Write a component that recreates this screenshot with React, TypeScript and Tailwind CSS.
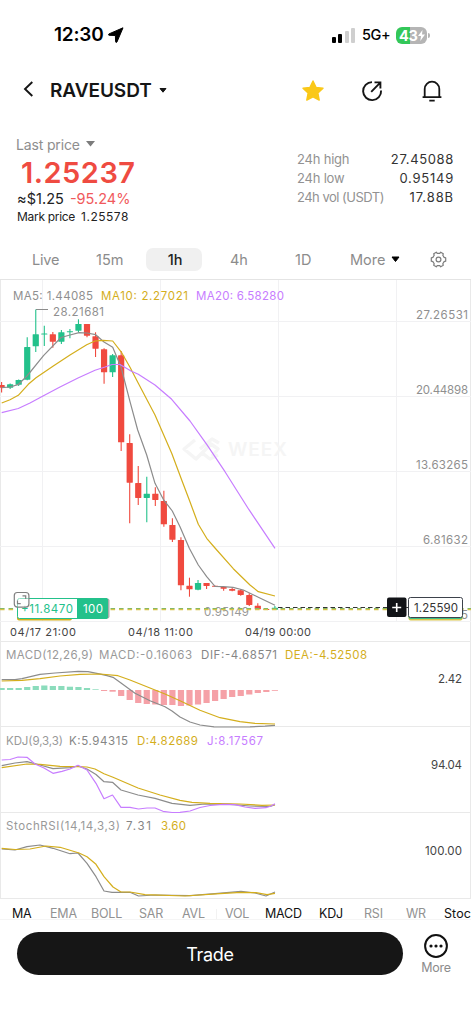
import React from 'react'
import clsx from 'clsx'

type Point = [number, number]

interface Candle {
  up: boolean
  top: number
  bottom: number
  high: number
  low: number
}

const GREEN = '#23c18b'
const RED = '#f04a3f'
const GRAY = '#8c8c8c'
const YELLOW = '#d4ae1c'
const PURPLE = '#c77dff'

const STEP = 8.54
const candleX = (i: number) => 1.6 + i * STEP

const c = (up: number, top: number, bottom: number, high: number, low: number): Candle => ({
  up: up === 1,
  top,
  bottom,
  high,
  low
})

const candles: Candle[] = [
  c(0, 385, 387.7, 382, 392.5),
  c(1, 384.3, 387.7, 383.5, 389),
  c(1, 380, 384.7, 379.5, 386),
  c(1, 347, 379.7, 337.3, 380.3),
  c(1, 334.3, 346.3, 309.5, 352),
  c(1, 333.6, 334.6, 325.7, 346),
  c(0, 334.3, 341.7, 332, 347.7),
  c(1, 332.3, 341.7, 330, 344),
  c(1, 331.2, 332.2, 329, 338.3),
  c(1, 324, 330.7, 319.3, 332.3),
  c(0, 324, 335.7, 324, 337.3),
  c(0, 336.3, 348.7, 332.3, 357),
  c(0, 349.3, 372.3, 348.3, 383.7),
  c(1, 355.3, 372.3, 354, 377),
  c(0, 355.3, 442.3, 351, 451),
  c(0, 443, 482.7, 434.3, 523.3),
  c(0, 483, 498, 466, 505),
  c(1, 493.7, 498, 476.7, 522.3),
  c(0, 493.7, 500, 487.3, 506),
  c(0, 501, 524.3, 490.7, 526.7),
  c(0, 525, 539.7, 518.3, 542),
  c(0, 540, 585.3, 537.3, 590.3),
  c(0, 585.7, 589.3, 577.7, 596.7),
  c(1, 583, 589.7, 580, 590.3),
  c(0, 583, 586, 583, 589),
  c(0, 585.8, 586.8, 585.8, 586.8),
  c(0, 587, 588.7, 586.7, 590.7),
  c(0, 589, 590.7, 587.7, 591.3),
  c(0, 590.3, 595, 589.3, 595.7),
  c(0, 595, 605, 593.3, 606),
  c(0, 605.7, 609.3, 603.3, 610),
  c(0, 609, 610, 609, 610),
  c(1, 607.7, 609.7, 606, 610)
]

const ma5: Point[] = [[1.7, 387.7], [10, 387], [18, 384.7], [27, 376], [43.5, 355.7], [61, 337.5], [70, 335], [79, 332.7], [87, 333], [95.7, 334.7], [104, 342], [112.7, 347.3], [121, 367], [130, 401.7], [137.7, 430], [146.7, 455], [155, 483.3], [163.3, 499.3], [172.3, 511], [180, 526.7], [189.3, 548.3], [198.3, 565], [206.7, 576.7], [215, 586.3], [223.3, 586.7], [233, 587.3], [243.3, 590], [258.3, 597.3], [275, 605.3]]
const ma10: Point[] = [[1.7, 403], [10, 399.7], [18.3, 395.3], [28.3, 384.3], [36, 377.7], [53.3, 366], [70, 355], [86.7, 344.7], [95, 341], [103.3, 340.3], [112.7, 341], [121.7, 352.7], [130, 367.3], [138.3, 383.3], [155, 415], [171.7, 453.3], [181.7, 480], [189.3, 500], [198.3, 524.3], [206.7, 538.3], [215, 548], [233.3, 568.7], [250, 585], [258.3, 591.7], [275, 596]]
const ma20: Point[] = [[1.7, 412.7], [18.3, 408.5], [30, 403], [43, 396], [60, 387], [78, 378], [95, 370.3], [105, 367], [112, 364.5], [120, 364.5], [131, 371], [138.3, 374.3], [155, 385], [171.7, 399.3], [190, 421], [206.7, 444.3], [225, 471.7], [249, 509.7], [275, 548.3]]

const dif: Point[] = [[1.7, 679.7], [15, 679.7], [22, 678.7], [40, 674.3], [55, 673], [78, 671.3], [88, 671.7], [98, 673.7], [107, 675.7], [113, 677.3], [121, 683], [135, 693.3], [150, 700.7], [165, 706.7], [172, 711], [180, 717], [190, 722], [200, 725], [214, 726.8], [230, 727], [250, 726.8], [265, 726.2], [275, 725.3]]
const dea: Point[] = [[1.7, 681], [22, 680.3], [40, 678.7], [60, 676], [80, 674.3], [100, 674], [118, 675.7], [130, 680], [150, 688], [165, 694], [180, 700.7], [200, 710.3], [220, 717.7], [240, 721.7], [255, 723.3], [275, 724]]
const histogram = [2, 2, 2, 3, 4, 4.5, 4, 4, 3.3, 3, 2, 0.7, -1, -1.7, -6, -10, -13, -14, -14.5, -15, -15, -16, -15.5, -14.5, -13, -11, -9, -7, -6, -4.5, -3, -2, -0.8]

const kdjJ: Point[] = [[1.7, 760], [10, 759.5], [18, 757], [27, 757.3], [35, 764], [44, 768], [53, 773.3], [62, 771.3], [70, 769], [78, 765.3], [87, 770], [96, 783.3], [104, 798.7], [112.5, 795], [121, 807.3], [130, 807.3], [138.5, 809], [147, 808], [155, 808], [163, 811.3], [172, 812.5], [180, 812.3], [190, 811], [200, 807.5], [210, 805.5], [223, 804.3], [235, 804.7], [245, 807], [255, 808.3], [266, 807.7], [271, 806], [275, 803.7]]
const kdjK: Point[] = [[1.7, 765.7], [15, 763], [27, 761.7], [40, 765], [53, 768.7], [70, 767.7], [78, 766], [87, 769], [96, 774.5], [104, 781.7], [112.5, 782.3], [121, 790], [138, 795], [155, 798.3], [172, 803.3], [190, 805.3], [205, 804], [230, 804.3], [250, 806], [270, 806.5], [275, 804.7]]
const kdjD: Point[] = [[1.7, 767.7], [27, 764], [40, 764.3], [60, 766.3], [78, 766.7], [87, 767], [95, 769], [104, 773.7], [113, 777.3], [138, 788], [160, 795], [180, 800.3], [192, 802.3], [210, 803.3], [240, 804], [262, 805.3], [275, 805]]

const stochK: Point[] = [[1.7, 849], [15, 850], [27, 846.7], [40, 845], [53, 848.3], [70, 853.7], [78, 853], [87, 863.3], [96, 876.7], [104, 891], [112, 892.3], [130, 892.3], [138.5, 896], [155, 895], [190, 895.7], [215, 893.7], [241, 891.3], [255, 893], [266, 896], [275, 892]]
const stochD: Point[] = [[1.7, 848.3], [15, 849.5], [30, 849], [46, 846], [60, 847.3], [70, 850.3], [79, 853], [87, 856.7], [96, 864.3], [104, 876.7], [113, 887], [121, 892], [130, 892], [145, 894.7], [185, 896], [220, 893.7], [241, 892.3], [256, 892.7], [267, 894.7], [275, 893.3]]

const Line: React.FC<{ points: Point[]; color: string }> = ({ points, color }) => (
  <polyline points={points.map((p) => p.join(',')).join(' ')} fill="none" stroke={color} strokeWidth="1.2" strokeLinejoin="round" />
)

interface LabelProps {
  x: number
  y: number
  w: number
  fill?: string
  size?: number
  weight?: number
  children: string
}

// w is the drawn width of the label, so columns of figures line up
const Label: React.FC<LabelProps> = ({ x, y, w, fill = '#8f8f8f', size = 11.5, weight = 400, children }) => (
  <text x={x} y={y} textLength={w} lengthAdjust="spacing" fill={fill} fontSize={size} fontWeight={weight}>
    {children}
  </text>
)

interface PanelProps {
  top: number
  height: number
  className: string
  children: React.ReactNode
}

const Panel: React.FC<PanelProps> = ({ top, height, className, children }) => (
  <svg viewBox={`0 ${top} 471 ${height}`} className={clsx('block w-full shrink-0 overflow-visible', className)}>
    <path d={`M.5 ${top}v${height}M470.5 ${top}v${height}M0 ${top + height - 0.5}h471`} stroke="#e9e9e9" />
    {children}
  </svg>
)

const StatusBar = () => (
  <div className="flex h-[70px] items-center justify-between pr-[41px] pl-[54px]">
    <div className="flex items-center gap-1">
      <span className="text-[19px] font-semibold tracking-[-0.2px] text-black">12:30</span>
      <svg width="16" height="16" viewBox="0 0 16 16">
        <path d="M15 .8 1 6.9c-.8.4-.6 1.3.2 1.4l6.2.2.2 6.2c.1.8 1 1 1.4.2z" fill="#000" stroke="#000" strokeLinejoin="round" />
      </svg>
    </div>
    <div className="flex items-center">
      <div className="flex h-[15px] w-6 items-end gap-[2.3px]">
        <i className="h-[6px] w-1 rounded-[1px] bg-black" />
        <i className="h-[9px] w-1 rounded-[1px] bg-black" />
        <i className="h-3 w-1 rounded-[1px] bg-[#cfcfcf]" />
        <i className="h-[15px] w-1 rounded-[1px] bg-[#cfcfcf]" />
      </div>
      <span className="ml-[6px] w-[28px] text-[14.5px] leading-5 font-medium tracking-[-0.4px] text-black">5G+</span>
      <div className="ml-[6px] flex h-[17px] w-[31px] items-center rounded-[6px] bg-[linear-gradient(90deg,#33c759_45%,#b5b5b5_45%)] pl-[3px] text-[14.5px] leading-[17px] font-bold tracking-[-0.3px] text-white">
        43
        <svg width="7" height="11" viewBox="0 0 7 11" className="shrink-0">
          <path d="M4.5 0 0 6h3l-.7 5L7 4.6H4z" fill="#fff" />
        </svg>
      </div>
      <i className="ml-px h-[5px] w-[2px] rounded-r bg-[#b5b5b5]" />
    </div>
  </div>
)

const Header = () => (
  <div className="flex h-10 items-center pt-px pl-[23px] text-[#151515]">
    <svg width="11" height="18" viewBox="0 0 11 18" className="-mt-1" fill="none" stroke="currentColor" strokeWidth="1.9">
      <path d="M9.3 2 2 9l7.3 7" />
    </svg>
    <h1 className="ml-4 w-[103px] pt-px text-[19px] font-semibold tracking-[-0.05px] whitespace-nowrap">RAVEUSDT</h1>
    <svg width="8" height="5" viewBox="0 0 8 5" className="ml-[6px]">
      <path d="M1 .5h6L4 4.2z" fill="currentColor" stroke="currentColor" strokeLinejoin="round" />
    </svg>
    <svg width="24" height="24" viewBox="0 0 24 24" className="ml-[134px]">
      <path d="m12 2 3 6.4 7 .9-5.1 4.8 1.3 7L12 17.8l-6.2 3.3 1.3-7L2 9.3l7-.9z" fill="#fac818" stroke="#fac818" strokeWidth="1.4" strokeLinejoin="round" />
    </svg>
    <svg width="24" height="24" viewBox="0 0 24 24" className="ml-[35px]" fill="none" stroke="currentColor" strokeWidth="1.9">
      <path d="M12 3.1a9 9 0 1 0 9.1 8.4M11.2 12.8 20 3.8M14.5 3.4h5.9v6" />
    </svg>
    <svg width="24" height="24" viewBox="0 0 24 24" className="ml-9" fill="none" stroke="currentColor" strokeWidth="1.8" strokeLinejoin="round">
      <path d="M4.7 17.5V10a7.3 7.3 0 0 1 14.6 0v7.5M2.6 18.2h18.8M9.3 21.7h5.4" />
    </svg>
  </div>
)

const stats = [
  { name: '24h high', value: '27.45088', nameStyles: 'tracking-[-0.2px]', valueStyles: 'tracking-[0.65px]' },
  { name: '24h low', value: '0.95149', nameStyles: 'tracking-[-0.2px]', valueStyles: 'tracking-[0.75px]' },
  { name: '24h vol (USDT)', value: '17.88B', nameStyles: 'tracking-[-0.5px]', valueStyles: 'tracking-[0.9px]' }
]

const Summary = () => (
  <div className="flex h-[135px] justify-between pt-[26px] pr-[17px] pl-4">
    <div className="flex flex-col items-start whitespace-nowrap">
      <div className="flex h-4 items-center gap-[6px] text-[14px] text-[#8e8e8e]">
        <span className="w-16 tracking-[-0.15px]">Last price</span>
        <svg width="9" height="6" viewBox="0 0 9 6">
          <path d="M0 0h9L4.5 5.6z" fill="#7c7c7c" />
        </svg>
      </div>
      <div className="mt-2 ml-[5px] text-[29px] leading-[26px] font-semibold tracking-[0.5px] text-[#ef4b41]">1.25237</div>
      <div className="mt-[3px] ml-px flex h-5 items-center gap-[6px] text-[14.5px]">
        <span className="tracking-[0.05px] text-[#222]">≈$1.25</span>
        <span className="text-[#f05a5c]">-95.24%</span>
      </div>
      <div className="ml-px flex h-4 items-center gap-[6px] text-[12px] text-[#222]">
        <span className="tracking-[-0.3px]">Mark price</span>
        <span className="tracking-[0.5px]">1.25578</span>
      </div>
    </div>
    <div className="w-[157px] pt-[14px] text-[13px] leading-[19px]">
      {stats.map(({ name, value, nameStyles, valueStyles }) => (
        <div key={name} className="flex justify-between whitespace-nowrap">
          <span className={clsx('text-[#929292]', nameStyles)}>{name}</span>
          <span className={clsx('text-[#333]', valueStyles)}>{value}</span>
        </div>
      ))}
    </div>
  </div>
)

const Intervals = () => (
  <div className="flex h-[34px] items-start pt-[3px] text-[14.5px] leading-[23px] text-[#8c8c8c]">
    <span className="ml-8 w-16 tracking-[-0.2px]">Live</span>
    <span className="w-[50px]">15m</span>
    <span className="w-14 rounded-[7px] bg-[#f0f0f0] pl-[2px] text-center font-medium text-[#222]">1h</span>
    <span className="ml-7 w-[65px]">4h</span>
    <span className="w-[55px]">1D</span>
    <span className="w-[41px]">More</span>
    <svg width="9" height="7" viewBox="0 0 9 7" className="mt-2">
      <path d="M1 1h7L4.5 5.5z" fill="#000" stroke="#000" strokeLinejoin="round" />
    </svg>
    <svg width="17" height="17" viewBox="0 0 17 17" className="mt-[3px] ml-[30px]" fill="none" stroke="#7d7d7d" strokeWidth="1.2" strokeLinejoin="round">
      <path d="M6.3 1.2 7.2 2.4h2.6l.9-1.2 2.6 1.5-.5 1.5 1.3 2.2 1.6.4v3.4l-1.6.4-1.3 2.2.5 1.5-2.6 1.5-.9-1.2H7.2l-.9 1.2-2.6-1.5.5-1.5-1.3-2.2-1.6-.4V6.8l1.6-.4 1.3-2.2-.5-1.5z" />
      <circle cx="8.5" cy="8.5" r="2.4" />
    </svg>
  </div>
)

const PriceChart = () => (
  <Panel top={279} height={363} className="h-[363px]">
    <path d="M42.5 279v342M160.5 279v342M278.5 279v342M396.5 279v342M0 321.5h471M0 396.5h471M0 471.5h471M0 546.5h471M0 621.5h471" stroke="#f1f1f3" />
    <path d="M0 279.5h471" stroke="#e4e4e4" />
    <g fill="none" stroke="#f5f5f5" strokeWidth="3.4" strokeLinejoin="round">
      <path d="m195 440-11 9 12 10 15-15 7 5-6 7M200 449l12-10 7 4M201 452l9 7 8-4" />
    </g>
    <Label x={228} y={456} w={59} fill="#f5f5f5" size={19} weight={600}>WEEX</Label>

    <Label x={13} y={299.5} w={80}>MA5: 1.44085</Label>
    <Label x={101} y={299.5} w={87} fill={YELLOW}>MA10: 2.27021</Label>
    <Label x={196} y={299.5} w={88} fill={PURPLE}>MA20: 6.58280</Label>
    <path d="M36 309.5h12" stroke={GRAY} />
    <Label x={53} y={315.5} w={51}>28.21681</Label>
    <Label x={416} y={319} w={52}>27.26531</Label>
    <Label x={416} y={394} w={52}>20.44898</Label>
    <Label x={416} y={469} w={52}>13.63265</Label>
    <Label x={423} y={544} w={45}>6.81632</Label>

    {candles.map(({ up, top, bottom, high, low }, i) => (
      <g key={i} fill={up ? GREEN : RED} stroke={up ? GREEN : RED}>
        <path d={`M${candleX(i)} ${high}V${low}`} strokeWidth="1.1" />
        <rect x={candleX(i) - 3.1} y={top} width="6.2" height={bottom - top} rx=".4" stroke="none" />
      </g>
    ))}
    <Line points={ma5} color={GRAY} />
    <Line points={ma10} color={YELLOW} />
    <Line points={ma20} color={PURPLE} />

    <Label x={204} y={615.5} w={45} fill="#999">0.95149</Label>
    <path d="M0 608.5h471" stroke="#86b964" strokeDasharray="4.6 3.9" />
    <path d="M0 609.6h471" stroke="#d8c148" strokeWidth="1.3" strokeDasharray="4.6 3.9" />
    <path d="M278 607.5h109" stroke="#333" strokeDasharray="4.5 3" />

    {/* open position tag */}
    <rect x="17" y="602" width="55" height="18.5" rx="2" fill={YELLOW} />
    <rect x="22" y="598.5" width="87.5" height="20" rx="2" fill="#aaa" />
    <rect x="17.5" y="598.5" width="90" height="20" rx="2" fill="#fff" stroke={GREEN} />
    <path d="M77 598h29a2 2 0 0 1 2 2v17a2 2 0 0 1-2 2H77z" fill={GREEN} />
    <Label x={21} y={613} w={52} fill={GREEN} size={11.5}>+11.8470</Label>
    <Label x={83} y={613} w={20} fill="#fff">100</Label>
    <rect x="14.3" y="592.5" width="14.6" height="14.6" rx="3" fill="#fff" fillOpacity=".5" stroke="#808080" strokeWidth="1.2" />
    <path d="M22.5 595.8h3.2v3.2M17.5 600.5v3.2h3.2" fill="none" stroke="#808080" strokeWidth="1.2" />

    {/* order button and current price */}
    <Label x={461} y={619} w={7}>5</Label>
    <rect x="387" y="597.5" width="19.5" height="19.5" rx="2" fill="#111317" />
    <path d="M396.7 603v9M392.2 607.5h9" stroke="#fff" strokeWidth="1.6" />
    <path d="M406 607.5h3" stroke="#333" />
    <rect x="408.5" y="600" width="54" height="20.5" rx="2" fill="#d8c44a" />
    <rect x="408.5" y="599" width="54" height="20" rx="2" fill="#3fc08a" />
    <rect x="408.5" y="597.5" width="54" height="20" rx="2" fill="#fff" stroke="#3d424b" />
    <Label x={414} y={612} w={44} fill="#333">1.25590</Label>

    <Label x={10} y={636} w={66} fill="#444" size={11}>04/17 21:00</Label>
    <Label x={128} y={636} w={65} fill="#444" size={11}>04/18 11:00</Label>
    <Label x={245} y={636} w={66} fill="#444" size={11}>04/19 00:00</Label>
  </Panel>
)

const MacdChart = () => (
  <Panel top={642} height={85} className="h-[85px]">
    <Label x={6} y={658.6} w={87} fill="#999">MACD(12,26,9)</Label>
    <Label x={99} y={658.6} w={93} fill="#999">MACD:-0.16063</Label>
    <Label x={201} y={658.6} w={76} fill="#858585">DIF:-4.68571</Label>
    <Label x={285} y={658.6} w={82} fill={YELLOW}>DEA:-4.52508</Label>
    <Label x={438} y={683} w={24} fill="#444">2.42</Label>
    {histogram.map((v, i) => (
      <rect key={i} x={candleX(i) - 3.1} y={v > 0 ? 690 - v : 690} width="6.2" height={Math.abs(v)} fill={v > 0 ? '#8bdcbc' : '#f5a1a7'} />
    ))}
    <Line points={dif} color={GRAY} />
    <Line points={dea} color={YELLOW} />
  </Panel>
)

const KdjChart = () => (
  <Panel top={727} height={86} className="h-[86px]">
    <Label x={6} y={744.5} w={57} fill="#999">KDJ(9,3,3)</Label>
    <Label x={69} y={744.5} w={59} fill="#858585">K:5.94315</Label>
    <Label x={137} y={744.5} w={61} fill={YELLOW}>D:4.82689</Label>
    <Label x={207} y={744.5} w={56} fill={PURPLE}>J:8.17567</Label>
    <Label x={431} y={769} w={31} fill="#444">94.04</Label>
    <Line points={kdjK} color={GRAY} />
    <Line points={kdjD} color={YELLOW} />
    <Line points={kdjJ} color={PURPLE} />
  </Panel>
)

const StochChart = () => (
  <Panel top={813} height={86} className="h-[86px]">
    <Label x={6} y={830} w={114} fill="#999">StochRSI(14,14,3,3)</Label>
    <Label x={126} y={830} w={25} fill="#858585">7.31</Label>
    <Label x={161} y={830} w={25} fill={YELLOW}>3.60</Label>
    <Label x={425} y={854.5} w={37} fill="#444">100.00</Label>
    <Line points={stochK} color={GRAY} />
    <Line points={stochD} color={YELLOW} />
  </Panel>
)

const indicators = [
  { name: 'MA', styles: 'ml-3 w-[38px] text-[#111]' },
  { name: 'EMA', styles: 'w-[41px]' },
  { name: 'BOLL', styles: 'w-12' },
  { name: 'SAR', styles: 'w-[43px]' },
  { name: 'AVL', styles: 'w-[34px]' },
  { name: 'VOL', styles: 'pl-2 w-[49px] border-l border-[#f2f2f2]' },
  { name: 'MACD', styles: 'w-[54px] text-[#111]' },
  { name: 'KDJ', styles: 'w-[45px] text-[#111]' },
  { name: 'RSI', styles: 'w-[42px]' },
  { name: 'WR', styles: 'w-[38px]' },
  { name: 'Stoch', styles: 'text-[#111] tracking-[0.1px]' }
]

const Indicators = () => (
  <div className="flex h-[21px] w-[471px] items-end overflow-hidden border-b border-[#f5f5f5] text-[12.5px] leading-[10px] tracking-[-0.2px] text-[#929292]">
    {indicators.map(({ name, styles }) => (
      <span key={name} className={clsx('shrink-0 whitespace-nowrap', styles)}>
        {name}
      </span>
    ))}
  </div>
)

const Footer = () => (
  <div className="flex h-[104px] items-start pt-3 pl-[17px]">
    <button className="h-[43px] w-[386px] rounded-full bg-[#161616] pt-px text-[18px] tracking-[-0.3px] text-white">Trade</button>
    <div className="ml-[15px] flex w-9 flex-col items-center pt-[2px] text-[12.5px] leading-4 text-[#8c8c8c]">
      <svg width="24" height="24" viewBox="0 0 24 24">
        <circle cx="12" cy="12" r="10.9" fill="none" stroke="#111" strokeWidth="2" />
        <path d="M7 12h.01M12 12h.01M17 12h.01" stroke="#111" strokeWidth="3.2" strokeLinecap="round" />
      </svg>
      <span className="mt-[2px] tracking-[-0.3px]">More</span>
    </div>
  </div>
)

export default function App() {
  return (
    <div className="flex h-[1024px] w-[471px] flex-col overflow-hidden bg-white font-['Inter',sans-serif]">
      <StatusBar />
      <Header />
      <Summary />
      <Intervals />
      <PriceChart />
      <MacdChart />
      <KdjChart />
      <StochChart />
      <Indicators />
      <Footer />
    </div>
  )
}
